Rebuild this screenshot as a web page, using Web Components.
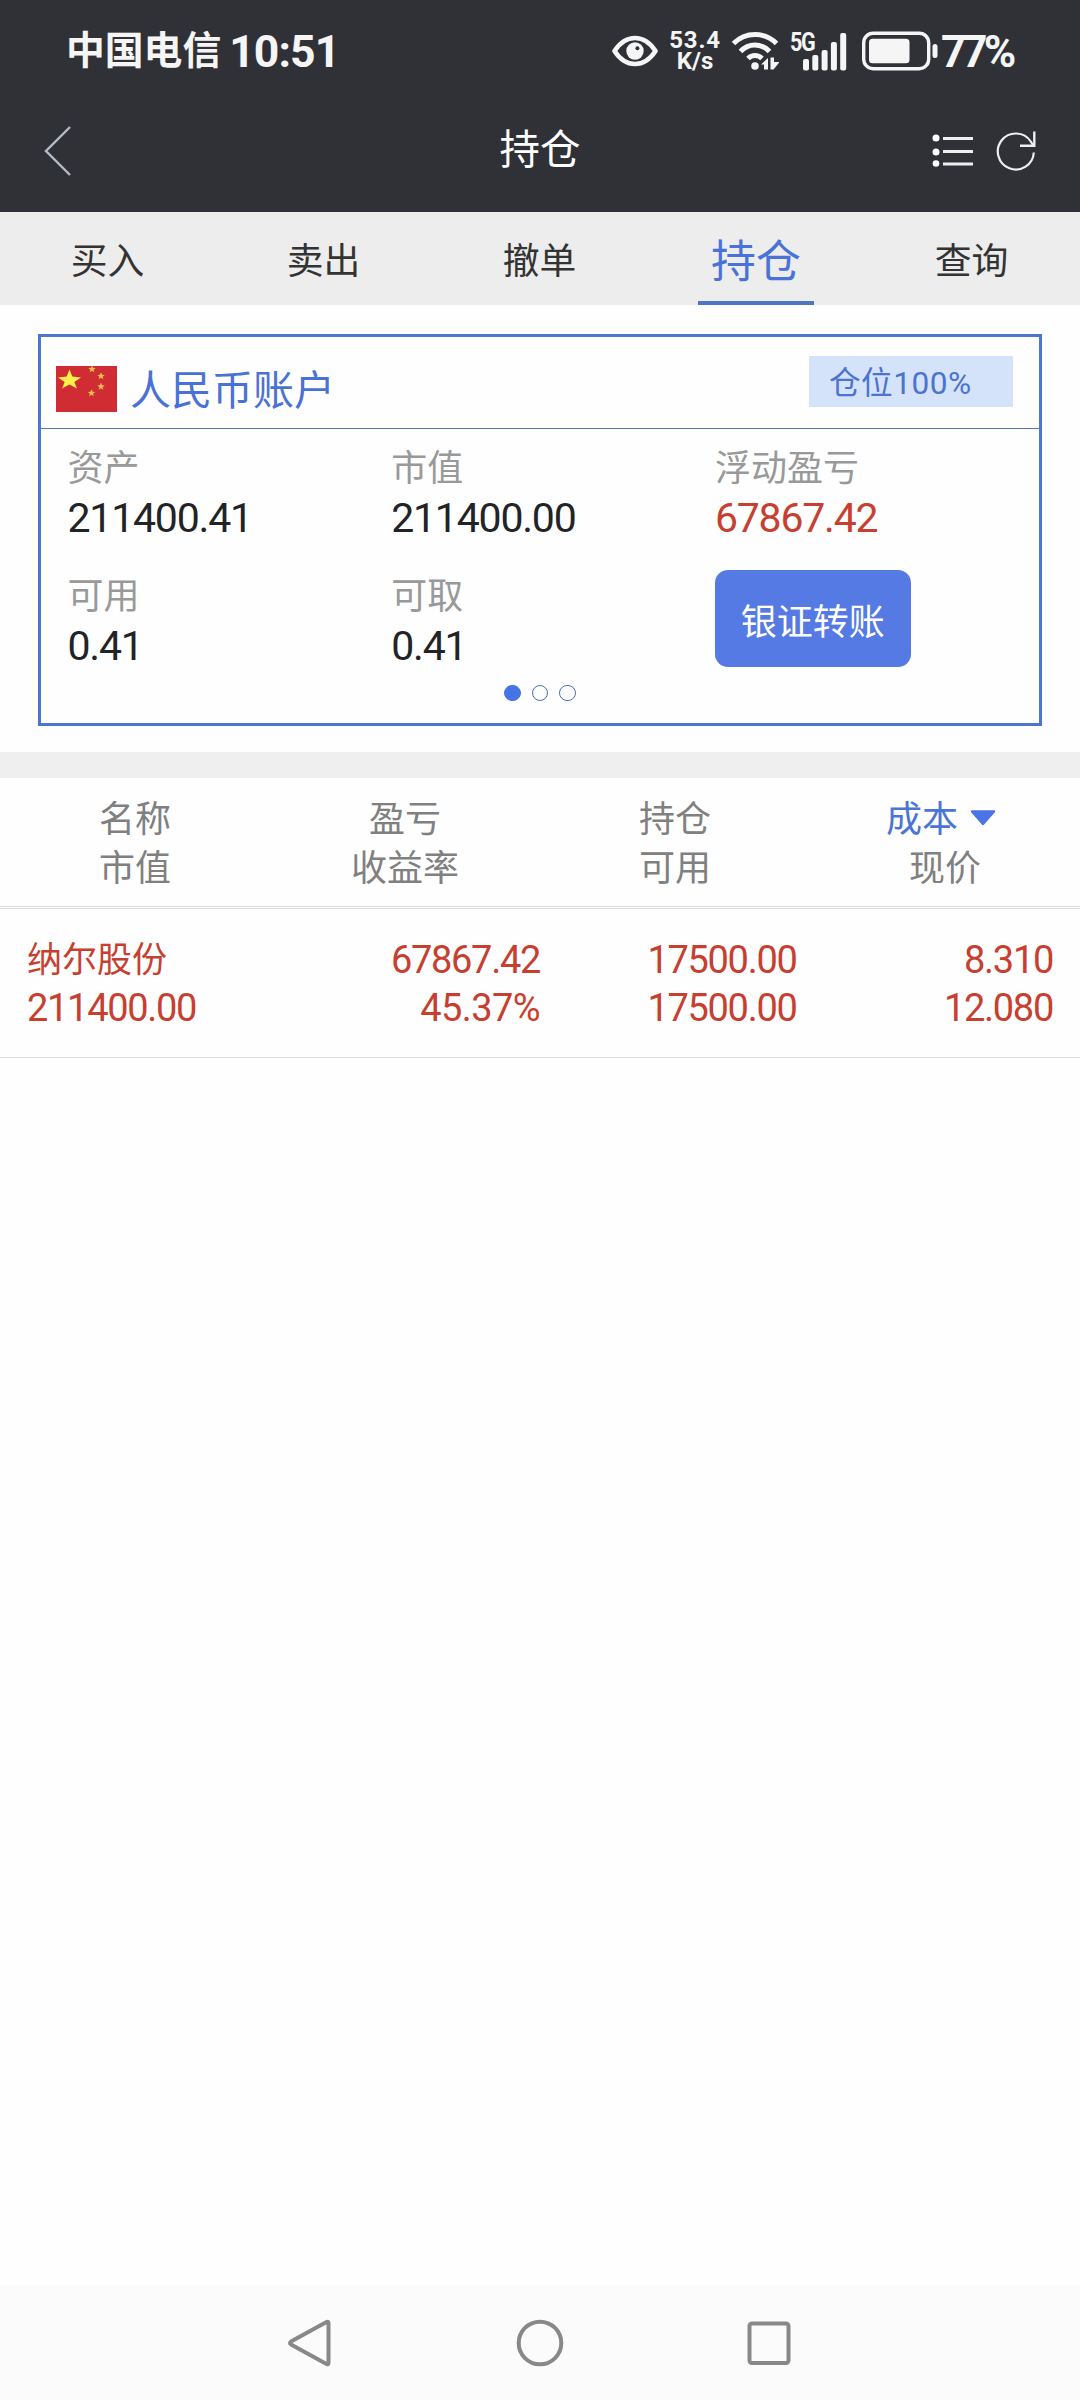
<!DOCTYPE html>
<html lang="zh-CN">
<head>
<meta charset="utf-8">
<title>持仓</title>
<style>
    html, body { margin: 0; padding: 0; background: #fefefe; }
    body {
        width: 1080px;
        height: 2400px;
        overflow: hidden;
        font-family: Roboto, "Noto Sans CJK SC", sans-serif;
        --blue: #4b73d0;
        --red: #c73f31;
        --bar-bg: #303136;
        --light: #f5f5f5;
    }
</style>
</head>
<body>
<trade-app>
    <status-bar slot="top" carrier="中国电信" time="10:51" speed="53.4" battery="77%"></status-bar>
    <title-bar slot="top">持仓</title-bar>
    <tab-bar slot="top">
        <tab-item>买入</tab-item>
        <tab-item>卖出</tab-item>
        <tab-item>撤单</tab-item>
        <tab-item active>持仓</tab-item>
        <tab-item>查询</tab-item>
    </tab-bar>
    <account-card>
        <span slot="name">人民币账户</span>
        <span slot="badge">仓位100%</span>
        <stat-item label="资产">211400.41</stat-item>
        <stat-item label="市值">211400.00</stat-item>
        <stat-item label="浮动盈亏" tone="up">67867.42</stat-item>
        <stat-item label="可用">0.41</stat-item>
        <stat-item label="可取">0.41</stat-item>
        <transfer-button>银证转账</transfer-button>
    </account-card>
    <holdings-table></holdings-table>
    <nav-bar slot="bottom"></nav-bar>
</trade-app>

<script>
class BaseElement extends HTMLElement {
    constructor() {
        super();
        this.attachShadow({ mode: 'open' });
    }

    connectedCallback() {
        this.shadowRoot.innerHTML = this.render();
    }
}

class TradeApp extends BaseElement {
    render() {
        return `
        <style>
            :host { display: flex; flex-direction: column; width: 1080px; height: 2400px; }
            main { flex: 1; }
        </style>
        <slot name="top"></slot>
        <main><slot></slot></main>
        <slot name="bottom"></slot>
        `;
    }
}
customElements.define('trade-app', TradeApp);

class StatusBar extends BaseElement {
    render() {
        // signal bars: [x, top]
        const bars = [[0, 58], [9.3, 54], [18.6, 49], [27.9, 41], [37.2, 32]].map(([x, y]) =>
            `<rect x="${x + 13}" y="${y - 31}" width="6" height="${69.5 - y}" rx="2" />`
        ).join('');

        return `
        <style>
            :host {
                display: flex;
                justify-content: space-between;
                box-sizing: border-box;
                height: 102px;
                padding: 0 66px;
                background: var(--bar-bg);
                color: var(--light);
                font-weight: 700;
                white-space: nowrap;
            }
            div { display: flex; align-items: center; }
            svg { display: block; flex: none; fill: var(--light); }
            .carrier { font-size: 38.8px; line-height: 60px; }
            .time { margin-left: 8px; font-size: 44.5px; line-height: 60px; letter-spacing: -0.9px; padding-top: 1px; }
            .speed {
                flex-direction: column;
                width: 56px;
                margin-left: 9px;
                font-size: 24px;
                line-height: 21px;
            }
            .speed span:first-child { letter-spacing: 0.8px; }
            .wifi { margin-left: 8px; }
            .signal { position: relative; margin-left: 11px; }
            .signal span {
                position: absolute;
                left: 0;
                top: 0;
                font-size: 26px;
                line-height: 20px;
                letter-spacing: -1.6px;
                transform: scaleX(0.83);
                transform-origin: left;
            }
            .battery { margin-left: 15px; }
            .percent { width: 73px; margin-left: 3px; font-size: 44px; line-height: 60px; letter-spacing: -3.9px; padding-top: 1px; }
        </style>
        <div>
            <span class="carrier">${this.getAttribute('carrier')}</span>
            <span class="time">${this.getAttribute('time')}</span>
        </div>
        <div>
            <svg width="46" height="32" viewBox="0 0 46 32">
                <path d="M2.5 16Q11 3 23 3Q35 3 43.5 16Q35 29 23 29Q11 29 2.5 16Z" fill="none" stroke="#f5f5f5" stroke-width="4.6" stroke-linejoin="round" />
                <circle cx="23" cy="16" r="8.7" />
                <circle cx="25.4" cy="13.2" r="2" fill="#303136" />
            </svg>
            <div class="speed"><span>${this.getAttribute('speed')}</span><span>K/s</span></div>
            <svg class="wifi" width="48" height="40" viewBox="0 0 48 40">
                <g fill="none" stroke="#f5f5f5" stroke-width="5">
                    <path d="M2.5 12.5Q11.5 3.5 24 3.5Q36.5 3.5 45.5 12.5" />
                    <path d="M9.5 20.5Q15.5 14 24 14Q32.5 14 38.5 20.5" />
                    <path d="M17 27.5Q20 24.5 24 24.5Q28 24.5 31 27.5" />
                </g>
                <circle cx="24" cy="35" r="3.8" />
                <path d="M30 33.5L37 27V38.5H33V33.5ZM39.5 26.5H43V31H48.5L42.5 38.5H39.5Z" />
            </svg>
            <div class="signal">
                <svg width="57" height="39" viewBox="0 0 57 39">${bars}</svg>
                <span>5G</span>
            </div>
            <svg class="battery" width="76" height="40" viewBox="0 0 76 40">
                <rect x="1.7" y="2.2" width="65" height="35.5" rx="9.5" fill="none" stroke="#f5f5f5" stroke-width="3.4" />
                <rect x="7" y="7.7" width="40.5" height="24.5" rx="3.5" />
                <rect x="70.5" y="13" width="5" height="14" rx="2.5" />
            </svg>
            <span class="percent">${this.getAttribute('battery')}</span>
        </div>
        `;
    }
}
customElements.define('status-bar', StatusBar);

class TitleBar extends BaseElement {
    render() {
        return `
        <style>
            :host {
                display: grid;
                grid-template-columns: 1fr auto 1fr;
                align-items: center;
                box-sizing: border-box;
                height: 110px;
                padding: 0 43px 12px;
                background: var(--bar-bg);
                color: #fff;
            }
            svg { display: block; fill: none; }
            .title { padding-bottom: 2px; font-size: 40.5px; line-height: 60px; }
            .actions { display: flex; justify-content: flex-end; gap: 22px; }
        </style>
        <svg width="30" height="52" viewBox="0 0 30 52">
            <path d="M27 2L3 26L27 50" stroke="#b4bbc8" stroke-width="2.4" />
        </svg>
        <span class="title"><slot></slot></span>
        <div class="actions">
            <svg width="42" height="42" viewBox="0 0 42 42">
                <path d="M12 8.5H42M12 21.5H42M12 34H42" stroke="#eee" stroke-width="3" />
                <g fill="#fff">
                    <circle cx="5" cy="8" r="3.5" />
                    <circle cx="5" cy="22" r="3.5" />
                    <circle cx="5" cy="33.5" r="3.3" />
                </g>
            </svg>
            <svg width="42" height="42" viewBox="0 0 42 42">
                <path d="M38.8 22.5A18 18 0 1 1 35.8 11.5L38.5 16" stroke="#eee" stroke-width="2.2" />
                <path d="M39.3 1.5V15.8H25" stroke="#eee" stroke-width="2.4" />
            </svg>
        </div>
        `;
    }
}
customElements.define('title-bar', TitleBar);

class TabBar extends BaseElement {
    render() {
        return `
        <style>
            :host { display: flex; height: 93px; background: #ededed; }
        </style>
        <slot></slot>
        `;
    }
}
customElements.define('tab-bar', TabBar);

class TabItem extends BaseElement {
    render() {
        return `
        <style>
            :host { flex: 1; display: flex; justify-content: center; color: #333; font-size: 36.8px; }
            span { box-sizing: border-box; height: 93px; padding: 4px 1px 0 0; line-height: 92px; }
            :host([active]) { color: #4a73d8; font-size: 45px; }
            :host([active]) span { width: 116px; padding: 5px 0 0; border-bottom: 4px solid #4f75c6; text-align: center; }
        </style>
        <span><slot></slot></span>
        `;
    }
}
customElements.define('tab-item', TabItem);

class AccountCard extends BaseElement {
    render() {
        // small stars around the big one on the flag
        const stars = [[36, 3], [45, 10], [45, 20.5], [35.5, 27]].map(([x, y]) =>
            `<path transform="translate(${x} ${y}) scale(0.34)" d="M0 -11L3 -3.5L11 -3L4.5 2L7 9.5L0 5L-7 9.5L-4.5 2L-11 -3L-3 -3.5Z" />`
        ).join('');

        return `
        <style>
            :host { display: block; padding: 29px 38px 26px; }
            .card { box-sizing: border-box; height: 392px; border: 3px solid #4e76cb; }
            header {
                display: flex;
                align-items: center;
                box-sizing: border-box;
                height: 92px;
                padding: 0 26px 0 15px;
                border-bottom: 1px solid #5176b8;
                color: var(--blue);
            }
            header svg { display: block; margin-top: 13px; }
            .name { margin: 16px auto 0 13px; font-size: 41px; line-height: 60px; color: #4a72d6; }
            .badge {
                box-sizing: border-box;
                width: 204px;
                height: 51px;
                margin-top: -2px;
                padding-left: 20px;
                background: #d5e3fa;
                font-size: 31.6px;
                line-height: 56px;
                letter-spacing: 0.5px;
            }
            .stats {
                display: grid;
                grid-template-columns: repeat(3, 323.7px);
                grid-auto-rows: 98px;
                row-gap: 30px;
                padding: 15px 0 0 26.5px;
                width: 971px;
                box-sizing: border-box;
            }
            .dots { display: flex; justify-content: center; gap: 11px; padding-top: 14.5px; }
            .dots i { box-sizing: border-box; width: 16.4px; height: 16.4px; border: 1px solid #4a70be; border-radius: 50%; }
            .dots i:first-child { background: #4673e6; border-color: #4673e6; }
        </style>
        <div class="card">
            <header>
                <svg width="61" height="46" viewBox="0 0 61 46">
                    <rect width="61" height="46" fill="#d02c33" />
                    <g fill="#f3c24c">${stars}</g>
                    <path transform="translate(13.5 14)" fill="#fff04a" d="M0 -10.5L2.8 -3.5L11.5 -2.5L4.8 2L7.5 8.5L0 4.5L-7.5 8.5L-4.8 2L-11.5 -2.5L-2.8 -3.5Z" />
                </svg>
                <span class="name"><slot name="name"></slot></span>
                <span class="badge"><slot name="badge"></slot></span>
            </header>
            <div class="stats"><slot></slot></div>
            <div class="dots"><i></i><i></i><i></i></div>
        </div>
        `;
    }
}
customElements.define('account-card', AccountCard);

class StatItem extends BaseElement {
    render() {
        return `
        <style>
            :host { display: flex; flex-direction: column; color: #222326; }
            :host([tone="up"]) { color: var(--red); }
            .label { color: #999; font-size: 36px; line-height: 50px; }
            .value { font-size: 41px; line-height: 48px; letter-spacing: -1.2px; }
        </style>
        <span class="label">${this.getAttribute('label')}</span>
        <span class="value"><slot></slot></span>
        `;
    }
}
customElements.define('stat-item', StatItem);

class TransferButton extends BaseElement {
    render() {
        return `
        <style>
            :host { display: block; }
            button {
                display: block;
                width: 196px;
                height: 97px;
                margin: -2px 0 0;
                padding: 1px 0 0;
                border: 0;
                border-radius: 13px;
                background: #557ae4;
                color: #fff;
                font: inherit;
                font-size: 36px;
            }
        </style>
        <button><slot></slot></button>
        `;
    }
}
customElements.define('transfer-button', TransferButton);

class HoldingsTable extends BaseElement {
    constructor() {
        super();
        this.columns = [['名称', '市值'], ['盈亏', '收益率'], ['持仓', '可用'], ['成本', '现价']];
        this.rows = [
            [['纳尔股份', '211400.00'], ['67867.42', '45.37%'], ['17500.00', '17500.00'], ['8.310', '12.080']]
        ];
    }

    render() {
        const head = this.columns.map(([a, b], i) => {
            const sorted = i === 3;
            const arrow = '<svg width="26" height="16" viewBox="0 0 26 16"><path d="M2 1.5H24L13 14Z" fill="#4a74e6" stroke="#4a74e6" stroke-width="2.4" stroke-linejoin="round" /></svg>';
            return `<div><span class="${sorted ? 'sorted' : ''}">${a}${sorted ? arrow : ''}</span><span>${b}</span></div>`;
        }).join('');

        const body = this.rows.map(row => `
            <div class="row">
                ${row.map(([a, b], i) => `<div><span class="${i === 0 ? 'stock' : ''}">${a}</span><span class="${b.endsWith('%') ? 'rate' : ''}">${b}</span></div>`).join('')}
            </div>`).join('');

        return `
        <style>
            :host { display: block; border-top: 26px solid #efefef; }
            .head, .row { display: grid; grid-template-columns: repeat(4, 1fr); box-sizing: border-box; }
            span { display: block; white-space: nowrap; }
            .head {
                height: 131px;
                padding-top: 18px;
                border-bottom: 3px double #dcdcdc;
                color: #808080;
                font-size: 36px;
                line-height: 49px;
                text-align: center;
            }
            .head .sorted {
                display: flex;
                justify-content: center;
                align-items: center;
                gap: 12px;
                padding-right: 8px;
                color: #4b74d6;
            }
            .sorted svg { display: block; margin-top: -5px; }
            .row {
                height: 149px;
                padding: 27px 27px 0;
                border-bottom: 1px solid #e0e0e0;
                color: var(--red);
                font-size: 38px;
                line-height: 48px;
                letter-spacing: -1.3px;
                text-align: right;
            }
            .row > div:first-child { text-align: left; }
            .row .stock { padding-top: 1px; margin-bottom: -1px; font-size: 35px; letter-spacing: 0; }
            .row .rate { letter-spacing: -0.6px; }
        </style>
        <div class="head">${head}</div>
        ${body}
        `;
    }
}
customElements.define('holdings-table', HoldingsTable);

class NavBar extends BaseElement {
    render() {
        return `
        <style>
            :host {
                display: flex;
                justify-content: center;
                align-items: center;
                gap: 179px;
                height: 114px;
                background: #fbfbfb;
            }
            svg { display: block; fill: none; stroke: #888; stroke-width: 4; stroke-linejoin: round; }
        </style>
        <svg width="50" height="50" viewBox="0 0 50 50"><path d="M40.5 4Q42.5 3 42.5 5.5V44.5Q42.5 47 40.5 46L5 26.5Q3 25 5 23.5Z" /></svg>
        <svg width="50" height="50" viewBox="0 0 50 50"><circle cx="25" cy="25" r="21.3" /></svg>
        <svg width="50" height="50" viewBox="0 0 50 50"><rect x="5.5" y="5.5" width="39" height="39.5" rx="2.5" /></svg>
        `;
    }
}
customElements.define('nav-bar', NavBar);
</script>
</body>
</html>
